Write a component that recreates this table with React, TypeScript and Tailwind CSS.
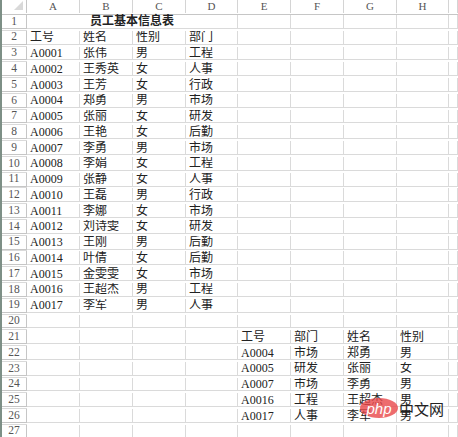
const cols = ['A', 'B', 'C', 'D', 'E', 'F', 'G', 'H', ''];

const staff = [
  ['工号', '姓名', '性别', '部门'],
  ['A0001', '张伟', '男', '工程'],
  ['A0002', '王秀英', '女', '人事'],
  ['A0003', '王芳', '女', '行政'],
  ['A0004', '郑勇', '男', '市场'],
  ['A0005', '张丽', '女', '研发'],
  ['A0006', '王艳', '女', '后勤'],
  ['A0007', '李勇', '男', '市场'],
  ['A0008', '李娟', '女', '工程'],
  ['A0009', '张静', '女', '人事'],
  ['A0010', '王磊', '男', '行政'],
  ['A0011', '李娜', '女', '市场'],
  ['A0012', '刘诗雯', '女', '研发'],
  ['A0013', '王刚', '男', '后勤'],
  ['A0014', '叶倩', '女', '后勤'],
  ['A0015', '金雯雯', '女', '市场'],
  ['A0016', '王超杰', '男', '工程'],
  ['A0017', '李军', '男', '人事'],
];

const result = [
  ['工号', '部门', '姓名', '性别'],
  ['A0004', '市场', '郑勇', '男'],
  ['A0005', '研发', '张丽', '女'],
  ['A0007', '市场', '李勇', '男'],
  ['A0016', '工程', '王超杰', '男'],
  ['A0017', '人事', '李军', '男'],
];

const grid = 'grid grid-cols-[25px_53px_53px_53px_52px_53px_53px_53px_52px_1fr]';
const font = { fontFamily: '"Liberation Serif", "Noto Sans CJK SC", serif' };

function rowCells(n: number): string[] {
  const cells = Array(9).fill('');
  if (n >= 2 && n <= 19) staff[n - 2].forEach((v, i) => (cells[i] = v));
  if (n >= 21 && n <= 26) result[n - 21].forEach((v, i) => (cells[i + 4] = v));
  return cells;
}

export default function App() {
  const rows = Array.from({ length: 28 }, (_, i) => i + 1);
  return (
    <div className="relative w-[458px] h-[437px] overflow-hidden bg-white border-l-2 border-[#7d8f86] text-[12px] text-[#222]" style={font}>
      {/* column headers */}
      <div className={`${grid} h-[15px] border-b border-[#c6c6c6] text-[#555] text-[11px]`}>
        <div className="relative border-r border-[#c6c6c6]">
          <div className="absolute right-[3px] bottom-[3px] w-0 h-0 border-l-[9px] border-l-transparent border-b-[9px] border-b-[#d9d9d9]" />
        </div>
        {cols.map((c, i) => (
          <div key={i} className="flex items-center justify-center border-r border-[#d4d4d4] leading-none">{c}</div>
        ))}
        <div />
      </div>
      {rows.map((n) => {
        const cells = rowCells(n);
        return (
          <div key={n} className={`${grid} h-[15.77px]`}>
            <div className="flex items-center justify-center border-r border-b border-[#c6c6c6] text-[#555] text-[11.5px] leading-none">{n}</div>
            {n === 1 ? (
              <>
                <div className="col-span-4 flex items-center justify-center border-r border-b border-[#dadada] font-bold leading-none">员工基本信息表</div>
                {cells.slice(4).map((_, i) => (
                  <div key={i} className="border-r border-b border-[#dadada]" />
                ))}
              </>
            ) : (
              cells.map((v, i) => (
                <div key={i} className="flex items-center pl-[3px] border-r border-b border-[#dadada] leading-none whitespace-nowrap overflow-hidden">{v}</div>
              ))
            )}
            <div className="border-b border-[#dadada]" />
          </div>
        );
      })}
      {/* watermark */}
      <div className="absolute left-[358px] top-[398px] flex items-center">
        <div className="w-[38px] h-[20px] rounded-[50%] bg-[#e8474a]/80 flex items-center justify-center text-white italic text-[15px] leading-none" style={{ fontFamily: '"Liberation Sans", sans-serif' }}>php</div>
        <div className="ml-[1px] text-[15px] text-[#222] leading-none" style={{ fontFamily: '"Noto Sans CJK SC", sans-serif' }}>中文网</div>
      </div>
    </div>
  );
}
